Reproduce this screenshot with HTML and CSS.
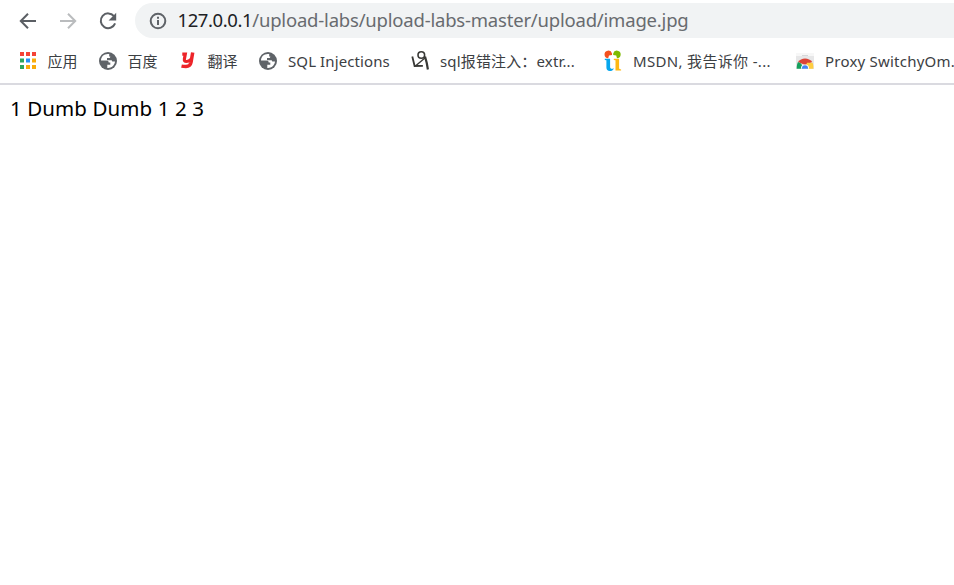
FILE: index.html
```html
<!DOCTYPE html>
<html lang="zh-CN">
<head>
<meta charset="utf-8">
<title>image.jpg</title>
<link rel="stylesheet" href="styles.css">
</head>
<body>
<header class="chrome">
  <div class="toolbar">
    <nav class="controls">
      <svg class="control" viewBox="0 0 20 20"><path d="M18 10H3M10 2.8 2.8 10l7.2 7.2"/></svg>
      <svg class="control disabled" viewBox="0 0 20 20"><path d="M2 10h15M10 2.8l7.2 7.2-7.2 7.2"/></svg>
      <svg class="control" viewBox="0 0 20 20"><path d="M16 5.2A7.4 7.4 0 1 0 17.1 12.4"/><path class="solid" d="M18.2 1.8v7.6h-7.6z"/></svg>
    </nav>
    <div class="address">
      <svg class="info" viewBox="0 0 18 18"><circle cx="9" cy="9" r="7.3"/><path d="M9 8v5M9 4.8v2"/></svg>
      <span class="url"><b>127.0.0.1</b>/upload-labs/upload-labs-master/upload/image.jpg</span>
    </div>
  </div>
  <nav class="bookmarks">
    <a class="bookmark">
      <svg viewBox="0 0 18 18"><g fill="#f44336"><path d="M1 0h4v4H1zM7 0h4v4H7zM13 0h4v4h-4z"/></g><g fill="#2da55d"><path d="M1 6.5h4v4H1zM1 13h4v4H1z"/></g><path fill="#2491f5" d="M7 6.5h4v4H7z"/><path fill="#f9ab0b" d="M13 6.5h4v4h-4zM7 13h4v4H7zM13 13h4v4h-4z"/></svg>
      <span class="cjk">应用</span>
    </a>
    <a class="bookmark">
      <svg viewBox="0 0 18 18"><circle cx="9" cy="9" r="9" fill="#5f6368"/><path fill="#fff" d="M10.2 2.1C5.6 1.3 2.1 4.3 2 8.4h5.4c1.6 0 2.3.9 2.3 2.1h1.6v2.2H8.3v3.2c3.8.4 7.3-2.3 7.7-6.4h-2c-.8 0-1.2-.5-1.2-1.3H8V6h1.8c1 0 1.5-.7 1.5-1.6h-1.1z"/></svg>
      <span class="cjk">百度</span>
    </a>
    <a class="bookmark">
      <svg viewBox="0 0 18 18" fill="none" stroke="#ed2429"><path stroke-width="3.2" d="M3.3 2.1h3L5.4 7c-.3 2 .5 2.5 2 2.5 1.900 0 3.300-.7 4.600-2"/><path stroke-width="3.500" d="M13.700.5 12 10.500c-.6 3-2.500 4-5 4-1.700 0-3-.1-4.500-.4"/></svg>
      <span class="cjk">翻译</span>
    </a>
    <a class="bookmark">
      <svg viewBox="0 0 18 18"><circle cx="9" cy="9" r="9" fill="#5f6368"/><path fill="#fff" d="M10.2 2.1C5.6 1.3 2.1 4.3 2 8.4h5.4c1.6 0 2.3.9 2.3 2.1h1.6v2.2H8.3v3.2c3.8.4 7.3-2.3 7.7-6.4h-2c-.8 0-1.2-.5-1.2-1.3H8V6h1.8c1 0 1.5-.7 1.5-1.6h-1.1z"/></svg>
      <span class="sql">SQL Injections</span>
    </a>
    <a class="bookmark">
      <svg viewBox="0 0 18 18" fill="none" stroke="#393936"><circle cx="10.3" cy="3" r="3.3" stroke-width="1.6"/><path stroke-width="1.8" d="M1.3 4.5 3.6 14l8.3-.2"/><path stroke-width="1.4" d="m5 13.5 9.2-7.7"/><path stroke-width="2.2" d="m14 4.5 1.7 6.3 1.2 6.7"/></svg>
      <span class="extr">sql报错注入：extr...</span>
    </a>
    <a class="bookmark">
      <svg viewBox="0 0 18 18"><path fill="#f4511e" d="M4.2 6.2A3.8 3.8 0 1 1 8 1.4V3L5 3.4z"/><path fill="#7fba00" d="M13 6.2A3.8 3.8 0 1 0 9.2 1.4V3l3 .4z"/><path fill="#06a7ee" d="M.8 6.8h5.3v8.3c0 1.9 2 2.2 3.9 1.1-.8 2-2.4 2.9-4.2 2.9-2.2 0-3.4-1.4-3.4-3.5V8.3L.8 8z"/><path fill="#fdb813" d="M9.8 6.8h5.3v9c0 1 .5 1.5 2 1.6v1.2h-5.6V8.3L9.8 8z"/></svg>
      <span class="msdn">MSDN, 我告诉你 -...</span>
    </a>
    <a class="bookmark">
      <svg viewBox="0 0 18 18"><path fill="#e7e7e8" d="M0 1h18v16H0z"/><path fill="#f7f7f7" d="M0 1h18v3H0z"/><path fill="#d6d7d9" d="M6 3h6v1H6z"/><path fill="#db4437" d="M2 10C5 5.3 13 5.3 16.3 10L9 13z"/><path fill="#16a05d" d="M2 10c-1 1.8-1.3 3.8-1.3 6.7H8L5 11.5z"/><path fill="#ffcd40" d="M11 10.8h5.6c.7 1.6.8 3.5.8 5.9H9z"/><path fill="#fff" d="M4.9 16.7a4.1 4.1 0 0 1 8.2 0z"/><path fill="#4285f4" d="M5.9 16.7a3.1 3.4 0 0 1 6.2 0z"/></svg>
      <span class="proxy">Proxy SwitchyOm...</span>
    </a>
  </nav>
</header>
<main><p class="result">1 Dumb Dumb 1 2 3</p></main>
</body>
</html>
```

FILE: styles.css
```css
* { box-sizing: border-box; }
body {
  margin: 0;
  height: 585px;
  overflow: hidden;
  background: #fff;
  font-family: "Noto Sans", "Noto Sans CJK SC", sans-serif;
}
.chrome { height: 85px; border-bottom: 2px solid #dadae0; }
.toolbar { display: flex; padding-top: 3px; height: 38px; }
.controls { display: flex; align-items: center; gap: 20px; width: 135px; padding-left: 17.5px; flex: none; }
.control { width: 20px; height: 20px; fill: none; stroke: #5b5f64; stroke-width: 2; }
.disabled { stroke: #babcbe; }
.control .solid { fill: #5b5f64; stroke: none; }
.address {
  flex: 1;
  display: flex;
  align-items: center;
  height: 35px;
  padding-left: 13.5px;
  gap: 11px;
  border-radius: 18px 0 0 18px;
  background: #f1f3f4;
}
.info { width: 18px; height: 18px; fill: none; stroke: #5f6368; stroke-width: 2; flex: none; }
.url { color: #686b6f; font-size: 18.5px; letter-spacing: -.2px; line-height: 33px; padding-bottom: 2px; white-space: nowrap; }
.url b { color: #202124; font-weight: 400; letter-spacing: -.4px; }
.bookmarks {
  display: grid;
  grid-template-columns: 80px 80px 80px 152px 193px 192px 180px;
  height: 45px;
  padding: 1px 0 0 19px;
  color: #3c4043;
  font-size: 15px;
}
.bookmark { display: flex; align-items: center; gap: 11px; white-space: nowrap; }
.bookmark svg { width: 18px; height: 18px; flex: none; overflow: visible; }
.bookmark span { line-height: 24px; }
.bookmark .cjk { margin-left: -.5px; }
.sql { letter-spacing: .1px; }
.extr { letter-spacing: .15px; }
.msdn { letter-spacing: .33px; }
.proxy { letter-spacing: .22px; }
.result { margin: 0; padding: 8px 10px; color: #000; font-size: 20.5px; letter-spacing: .1px; line-height: 31px; }
```
